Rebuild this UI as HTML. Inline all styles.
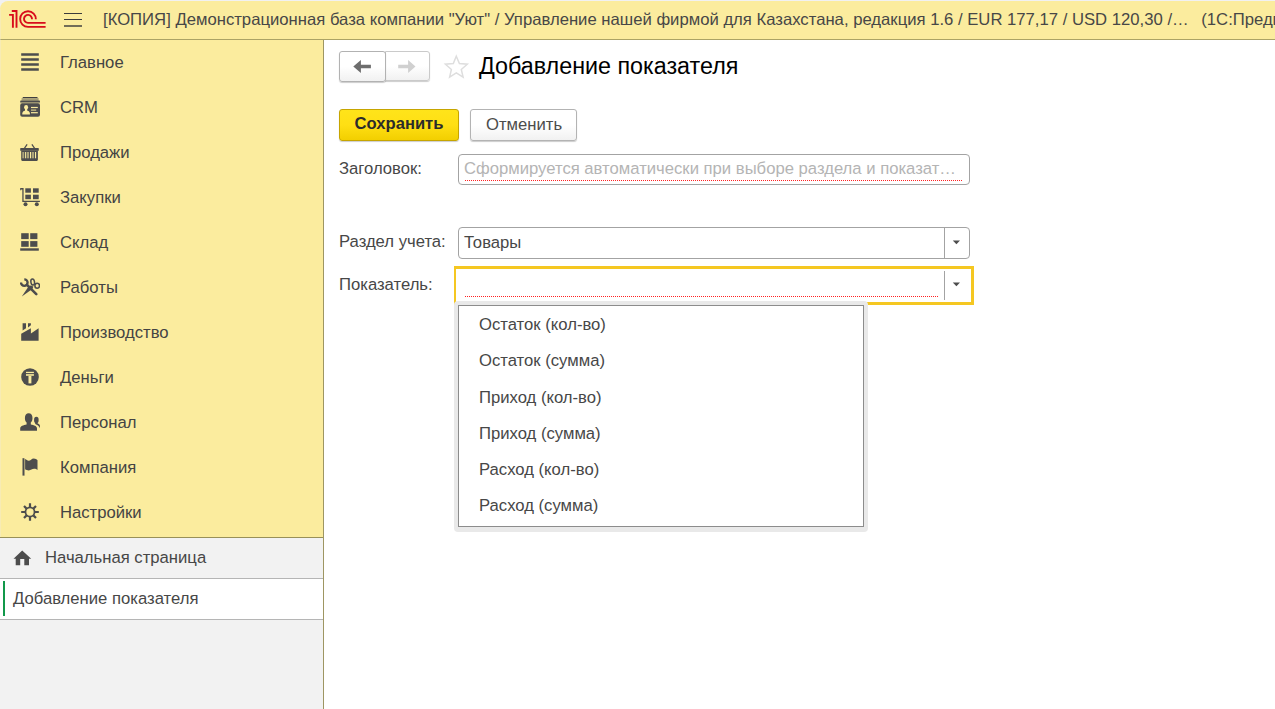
<!DOCTYPE html>
<html lang="ru">
<head>
<meta charset="utf-8">
<title>Добавление показателя</title>
<style>
*{box-sizing:border-box;margin:0;padding:0}
html,body{width:1275px;height:709px;overflow:hidden;background:#fff}
body{font-family:"Liberation Sans",sans-serif;font-size:16.67px;color:#474747;position:relative}
.abs{position:absolute}
.t{position:absolute;white-space:nowrap;line-height:20px;height:20px}
/* window chrome */
#corner{left:0;top:0;width:1275px;height:40px;background:#f1f1f1}
#topbar{left:0;top:1px;width:1275px;height:38px;background:#fbec9e;border-top-left-radius:8px}
#topline{left:0;top:39px;width:1275px;height:1px;background:#aba365}
#sidebar{left:0;top:40px;width:323px;height:497px;background:#fbec9e}
#sideborder{left:323px;top:40px;width:1px;height:669px;background:#9e9662}
#sidebottom{left:0;top:537px;width:323px;height:1px;background:#989058}
#panel{left:0;top:538px;width:323px;height:171px;background:#f2f2f2}
.nav{position:absolute;left:60px;white-space:nowrap;line-height:20px;height:20px;color:#444}
.ico{position:absolute;left:20px;width:20px;height:20px}
/* form */
.btn{position:absolute;border:1px solid #b3b3b3;border-radius:3px;background:linear-gradient(#fff 0%,#fff 50%,#f1f1f1 100%);box-shadow:0 1px 1px rgba(0,0,0,.2)}
.inp{position:absolute;border:1px solid #a3a3a3;border-radius:4px;background:#fff}
.dots{position:absolute;height:1px;background-image:linear-gradient(90deg,#f22 50%,transparent 50%);background-size:2px 1px}
</style>
</head>
<body>
<div class="abs" id="corner"></div>
<div class="abs" id="topbar"></div>
<div class="abs" id="topline"></div>
<div class="abs" id="sidebar"></div>
<div class="abs" id="sidebottom"></div>
<div class="abs" id="panel"></div>
<div class="abs" id="sideborder"></div>
<div class="abs" style="left:0;top:9px;width:1px;height:528px;background:rgba(240,236,220,.35)"></div>

<!-- TOPBAR CONTENT -->
<svg class="abs" style="left:0;top:0" width="56" height="39" viewBox="0 0 56 39">
  <g fill="none" stroke="#d80d1b" stroke-width="1.9" stroke-linejoin="miter">
    <path d="M11.8 11H16.5V27.8"/>
    <path d="M9.1 14.9H12.9V27.8"/>
    <path d="M35.85 19.2A7.85 7.85 0 1 0 28 26.9H45.6"/>
    <path d="M32 19.2A4 4 0 1 0 28 22.9H45.6"/>
  </g>
</svg>
<div class="abs" style="left:64px;top:13px;width:18px;height:1px;background:#3b3b3b"></div>
<div class="abs" style="left:64px;top:19px;width:18px;height:1px;background:#3b3b3b"></div>
<div class="abs" style="left:64px;top:25px;width:18px;height:2px;background:rgba(59,59,59,.72)"></div>
<div class="t" id="apptitle" style="left:103px;top:9.5px;font-size:16.685px">[КОПИЯ] Демонстрационная база компании "Уют" / Управление нашей фирмой для Казахстана, редакция 1.6 / EUR 177,17 / USD 120,30 /…</div>
<div class="t" id="appright" style="left:1201.3px;top:9.5px">(1С:Предприятие)</div>
<!-- SIDEBAR CONTENT -->
<!-- 1 Главное -->
<svg class="ico" style="top:52px" viewBox="0 0 20 20"><g fill="#4d4d4d"><rect x="1.2" y="1.25" width="17.6" height="2.5"/><rect x="1.2" y="6.25" width="17.6" height="2.5"/><rect x="1.2" y="11.25" width="17.6" height="2.5"/><rect x="1.2" y="16.25" width="17.6" height="2.5"/></g></svg>
<div class="nav" style="top:53px">Главное</div>
<!-- 2 CRM -->
<svg class="ico" style="top:97px" viewBox="0 0 20 20"><g fill="#4d4d4d">
<rect x="2.6" y="0" width="15" height="1.1" rx=".5" fill="#3f3f3f"/>
<rect x="1.6" y="1.1" width="17" height="2.5" fill="#4d4d4d" opacity=".5"/>
<rect x="0.2" y="3.6" width="19.8" height="1.5" rx=".7"/>
<rect x="0.2" y="4.9" width="19.8" height="1.4" opacity=".55"/>
<path d="M2.2 6.2H17.8A2.1 2.1 0 0 1 20 8.3V17.7A2.1 2.1 0 0 1 17.8 19.8H2.2A2.1 2.1 0 0 1 0.2 17.7V8.3A2.1 2.1 0 0 1 2.2 6.2Z"/>
</g><g fill="#fbec9e"><ellipse cx="6.1" cy="10.3" rx="2" ry="2.2"/><path d="M2.3 17.6V16.4C2.3 14.8 4 13.6 6.1 13.6S9.9 14.8 9.9 16.4V17.6Z"/><rect x="5" y="11.5" width="2.2" height="3"/><rect x="11" y="9.9" width="6.8" height="1.2"/><rect x="11" y="12.5" width="5.2" height="1.2" opacity=".8"/><rect x="11" y="15.1" width="6.8" height="1.2"/></g></svg>
<div class="nav" style="top:98px">CRM</div>
<!-- 3 Продажи -->
<svg class="ico" style="top:142px" viewBox="0 0 20 20"><g fill="#4d4d4d">
<path d="M3.7 6.3 6.6 2 7.6 2.7 5.2 6.3Z"/><path d="M15.3 6.3 12.4 2 11.4 2.7 13.8 6.3Z"/>
<rect x="0.2" y="6" width="18.6" height="2.8" rx=".4"/>
<path d="M1.2 8.6H17.9V17.8A1.1 1.1 0 0 1 16.8 18.9H2.3A1.1 1.1 0 0 1 1.2 17.8Z"/></g>
<g fill="#fbec9e"><rect x="2.3" y="10" width="1.9" height="6.3" opacity=".55"/><rect x="5.1" y="10" width="1.1" height="6.3"/><rect x="6.9" y="10" width="2.2" height="6.3" opacity=".55"/><rect x="10" y="10" width="1.1" height="6.3"/><rect x="11.8" y="10" width="2.3" height="6.3" opacity=".55"/><rect x="15" y="10" width="1.1" height="6.3"/></g></svg>
<div class="nav" style="top:143px">Продажи</div>
<!-- 4 Закупки -->
<svg class="ico" style="top:187px" viewBox="0 0 20 20"><g fill="#4d4d4d">
<path d="M0.2 1.1H3.6V13.7H19.9V15H2.3V2.4H1.2V3.2H0.2Z"/>
<circle cx="5.5" cy="17.2" r="2"/><circle cx="16.8" cy="17.2" r="2"/>
<rect x="5.3" y="1.3" width="5.6" height="4.4"/><rect x="13" y="1.3" width="5.7" height="4.4"/><rect x="5.3" y="7.7" width="5.6" height="4.5"/><rect x="13" y="7.7" width="5.7" height="4.5"/></g></svg>
<div class="nav" style="top:188px">Закупки</div>
<!-- 5 Склад -->
<svg class="ico" style="top:232px" viewBox="0 0 20 20"><g fill="#4d4d4d">
<rect x="1.2" y="1.2" width="7.5" height="5.9"/><rect x="10.2" y="1.2" width="7.2" height="5.9"/><rect x="1.2" y="9.1" width="7.5" height="5.7"/><rect x="10.2" y="9.1" width="7.2" height="5.7"/><rect x="0.2" y="16.3" width="18.6" height="2.4"/></g></svg>
<div class="nav" style="top:233px">Склад</div>
<!-- 6 Работы -->
<svg class="ico" style="top:277px" viewBox="0 0 20 20">
<g fill="none" stroke="#4d4d4d">
<path d="M4.3 2.3A3.3 3.3 0 1 1 1 5.6" stroke-width="2.3"/>
<path d="M7 7.8 16.3 17.1" stroke-width="2.6" stroke-linecap="round"/>
<ellipse cx="12.7" cy="5" rx="1.8" ry="3.1" transform="rotate(-10 12.7 5)" stroke-width="1.5"/>
<ellipse cx="17.2" cy="8.7" rx="2.3" ry="2.5" stroke-width="1.5"/>
</g>
<path d="M1.8 19.6 8.7 9.2 10.6 8.5 13.4 9.4 12.4 12Z" fill="#4d4d4d"/>
</svg>
<div class="nav" style="top:278px">Работы</div>
<!-- 7 Производство -->
<svg class="ico" style="top:322px" viewBox="0 0 20 20"><g fill="#4d4d4d">
<path d="M1.2 18.85V11.8L10.9 6.2V11.4L18.6 6.2V18.85Z"/>
<path d="M2.6 1.2H6V6.3L2.6 8.4Z"/><path d="M8 1.2H10.9V3.2L8 5.6Z"/></g></svg>
<div class="nav" style="top:323px">Производство</div>
<!-- 8 Деньги -->
<svg class="ico" style="top:367px" viewBox="0 0 20 20"><circle cx="10" cy="10" r="8.8" fill="#4d4d4d"/>
<g fill="#fbec9e"><rect x="6" y="4.8" width="7.9" height="1.2"/><rect x="6" y="6.9" width="7.9" height="2" opacity=".85"/><rect x="8.5" y="8.9" width="2.9" height="7.5"/></g></svg>
<div class="nav" style="top:368px">Деньги</div>
<!-- 9 Персонал -->
<svg class="ico" style="top:412px" viewBox="0 0 20 20"><g fill="#4d4d4d">
<ellipse cx="16.35" cy="8" rx="2.3" ry="3.2"/>
<path d="M15.2 10.3H17.5V11.2C18.7 11.7 19.95 12.5 19.95 13.8V16.2C19.1 14.2 17.3 12.9 15.2 12.1Z"/>
<path d="M0.2 18.85V16.4C0.2 14.2 3.4 13.3 6.6 12.6V10.6C5.5 9.6 4.9 8 4.9 6 4.9 3.1 6.3 1.2 8.7 1.2S12.5 3.1 12.5 6C12.5 8 11.9 9.6 10.8 10.6V12.6C14 13.3 17 14.2 17 16.4V18.85Z"/></g></svg>
<div class="nav" style="top:413px">Персонал</div>
<!-- 10 Компания -->
<svg class="ico" style="top:457px" viewBox="0 0 20 20"><g fill="#4d4d4d">
<rect x="2.5" y="1.2" width="1.8" height="17.4"/><rect x="4.3" y="1.6" width=".7" height="17" opacity=".4"/>
<path d="M5.1 2C6.4 2.6 7.3 3.8 8.6 3.8 10.6 3.8 11.5 1.5 13.8 1.5 15.4 1.5 16.6 2.4 17.5 3.2V12.9C16.6 12.3 15.6 11.8 14.1 11.8 12 11.8 10.9 13.4 8.8 13.4 7.3 13.4 6.2 12.8 5.1 12.2Z"/></g></svg>
<div class="nav" style="top:458px">Компания</div>
<!-- 11 Настройки -->
<svg class="ico" style="top:502px" viewBox="0 0 20 20"><g stroke="#4d4d4d" fill="none">
<circle cx="10" cy="10" r="4.55" stroke-width="1.8"/>
<g stroke-width="2.2" stroke-linecap="butt"><path d="M10 1.2V5M10 15V18.8M1.2 10H5M15 10H18.8"/><path d="M4 4 6.6 6.6M13.4 13.4 16 16M16 4 13.4 6.6M6.6 13.4 4 16"/></g></g></svg>
<div class="nav" style="top:503px">Настройки</div>
<!-- PANEL CONTENT -->
<svg class="abs" style="left:12px;top:549px" width="22" height="18" viewBox="0 0 22 18"><path fill="#4d4d4d" d="M10.2 1.6 19.2 9.7H17V16.2H12.3V9.9H8.2V16.2H3.7V9.7H1.5Z"/></svg>
<div class="t" style="left:45px;top:548px">Начальная страница</div>
<div class="abs" style="left:0;top:578px;width:323px;height:1px;background:#b5b5b5"></div>
<div class="abs" style="left:0;top:579px;width:323px;height:40px;background:#fff"></div>
<div class="abs" style="left:3px;top:581px;width:2px;height:35px;background:#11984a"></div>
<div class="t" style="left:13px;top:589px">Добавление показателя</div>
<div class="abs" style="left:0;top:619px;width:323px;height:1px;background:#b5b5b5"></div>
<!-- MAIN CONTENT -->
<!-- nav buttons -->
<div class="btn" style="left:385px;top:51px;width:45px;height:30px;border-radius:0 3px 3px 0;border-color:#cacaca"></div>
<div class="btn" style="left:339px;top:51px;width:47px;height:30.5px;border-radius:3px;border-color:#b2b2b2"></div>
<svg class="abs" style="left:339px;top:51px" width="91" height="30" viewBox="0 0 91 30">
  <path fill="#6d6d6d" d="M14.3 15.5 21.9 8.9V13.85H31.9V17.2H21.9V22.1Z"/>
  <path fill="#d0d0d0" d="M76.5 15.5 69.1 8.9V13.85H59.2V17.2H69.1V22.1Z"/>
</svg>
<svg class="abs" style="left:443px;top:53px" width="27" height="27" viewBox="0 0 27 27"><path fill="none" stroke="#dedede" stroke-width="1.5" stroke-linejoin="miter" d="M13.3 3.2 16.4 10.5 24.3 11.2 18.3 16.4 20.1 24.1 13.3 19.9 6.6 24.1 8.4 16.4 2.4 11.2 10.3 10.5Z"/></svg>
<div class="abs" id="h1" style="left:479px;top:52px;font-size:23.3px;line-height:28px;height:28px;white-space:nowrap;color:#000">Добавление показателя</div>
<!-- command buttons -->
<div class="btn" id="save" style="left:339px;top:109px;width:120px;height:32px;border-color:#c6a500;background:linear-gradient(#ffe41a 0%,#ffdf14 50%,#f2cf00 100%)"></div>
<div class="t" style="left:354.6px;top:114px;font-weight:bold;font-size:16.6px;color:#2b2b2b">Сохранить</div>
<div class="btn" id="cancel" style="left:470px;top:109px;width:107px;height:32px"></div>
<div class="t" style="left:486px;top:115px;color:#4c4c4c">Отменить</div>
<!-- Заголовок -->
<div class="t" style="left:339px;top:158.5px">Заголовок:</div>
<div class="inp" style="left:458px;top:154px;width:512px;height:31px"></div>
<div class="t" style="left:464px;top:158.5px;color:#b4b4b4">Сформируется автоматически при выборе раздела и показат…</div>
<div class="dots" style="left:465px;top:180px;width:498px"></div>
<!-- Раздел учета -->
<div class="t" style="left:339px;top:232px">Раздел учета:</div>
<div class="inp" style="left:458px;top:227px;width:512px;height:32px"></div>
<div class="abs" style="left:944px;top:228px;width:1px;height:30px;background:#a3a3a3"></div>
<svg class="abs" style="left:952px;top:240px" width="9" height="5" viewBox="0 0 9 5"><path fill="#4d4d4d" d="M0.8 0.4H8L4.4 4.3Z"/></svg>
<div class="t" style="left:464px;top:233px">Товары</div>
<!-- Показатель -->
<div class="t" style="left:339px;top:274.5px">Показатель:</div>
<div class="abs" style="left:454px;top:266px;width:520px;height:39px;border:3px solid #f5c721;border-left-width:2px;background:#fff"></div>
<div class="abs" style="left:944px;top:271px;width:1px;height:29px;background:#a3a3a3"></div>
<svg class="abs" style="left:952px;top:282px" width="9" height="5" viewBox="0 0 9 5"><path fill="#4d4d4d" d="M0.8 0.4H8L4.4 4.3Z"/></svg>
<div class="dots" style="left:465px;top:296px;width:474px"></div>
<!-- popup -->
<div class="abs" style="left:454px;top:301px;width:414px;height:230.5px;background:#e9e9e9;border-radius:4px"></div>
<div class="abs" style="left:458px;top:305px;width:406px;height:222px;background:#fff;border:1px solid #8c8c8c"></div>
<div class="t" style="left:479px;top:315px">Остаток (кол-во)</div>
<div class="t" style="left:479px;top:351px">Остаток (сумма)</div>
<div class="t" style="left:479px;top:388px">Приход (кол-во)</div>
<div class="t" style="left:479px;top:424px">Приход (сумма)</div>
<div class="t" style="left:479px;top:460px">Расход (кол-во)</div>
<div class="t" style="left:479px;top:496px">Расход (сумма)</div>
</body>
</html>
